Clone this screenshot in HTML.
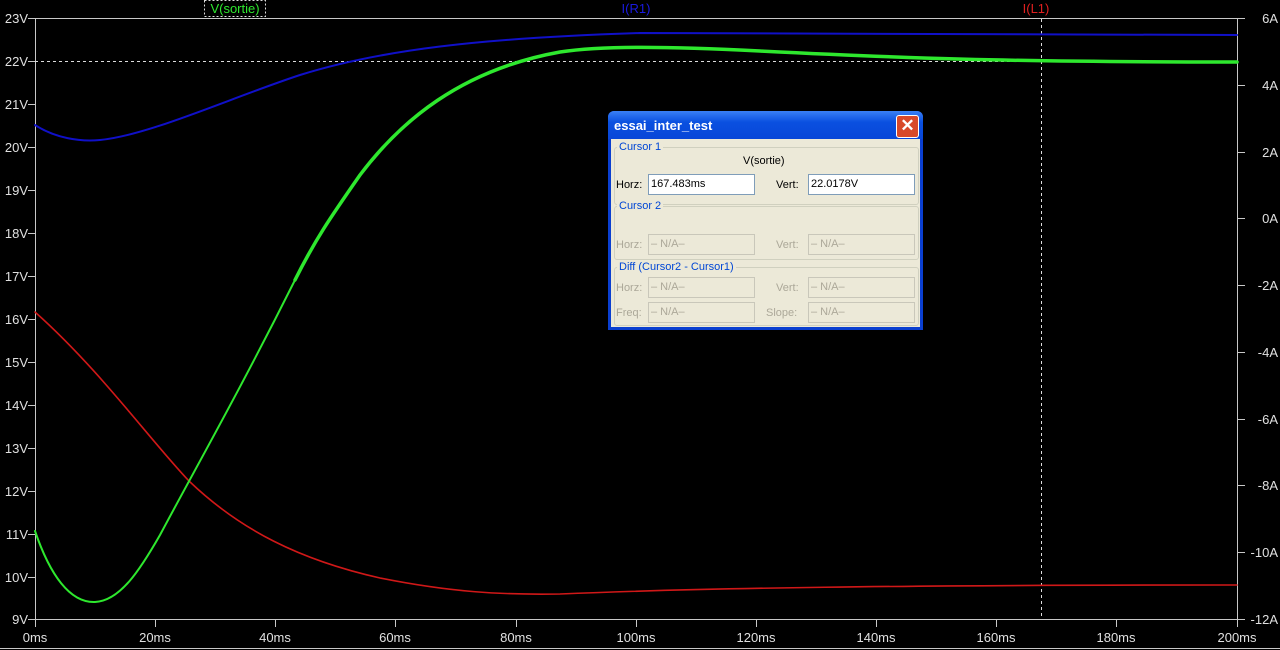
<!DOCTYPE html>
<html><head><meta charset="utf-8"><style>
html,body{margin:0;padding:0;background:#000;width:1280px;height:650px;overflow:hidden;font-family:"Liberation Sans",sans-serif}
svg{position:absolute;left:0;top:0}
.dlg{position:absolute;left:608px;top:111px;width:315px;height:219px;background:#0a3fd0;border-radius:6px 6px 0 0}
.tb{position:absolute;left:0;top:0;width:315px;height:28px;background:linear-gradient(#3a80f5,#0a50e0 40%,#0846d8);border-radius:6px 6px 0 0;color:#fff;font-weight:bold;font-size:13px;line-height:30px;padding-left:6px;box-sizing:border-box}
.x{position:absolute;right:4px;top:4px;width:21px;height:21px;background:#d8492a;border:1px solid #fff;border-radius:3px;color:#fff;font-size:17px;line-height:20px;text-align:center;font-weight:bold}
.body{position:absolute;left:3px;top:28px;width:309px;height:188px;background:#ece9d8}
.g{position:absolute;left:3px;width:303px;border:1px solid #d0d0bf;border-radius:3px}
.lg{position:absolute;font-size:11px;color:#0046d5;background:#ece9d8;padding:0 2px}
.l{position:absolute;font-size:11px;color:#000}
.d{color:#aca899}
.in{position:absolute;width:107px;height:21px;background:#fff;border:1px solid #7f9db9;box-sizing:border-box;font-size:11px;line-height:19px;padding-left:2px}
.in.dis{background:#ece9d8;color:#aca899;border-color:#c9c7ba}
</style></head><body>
<svg width="1280" height="650" xmlns="http://www.w3.org/2000/svg">
<g stroke="#c8c8c8" stroke-width="1" fill="none">
<line x1="35.5" y1="18" x2="35.5" y2="620"/>
<line x1="1237.5" y1="18" x2="1237.5" y2="620"/>
<line x1="35" y1="18.5" x2="1238" y2="18.5"/>
<line x1="35" y1="619.5" x2="1238" y2="619.5"/>
</g>
<g stroke="#c8c8c8" stroke-width="1">
<line x1="28" y1="18.5" x2="35" y2="18.5"/><line x1="28" y1="61.5" x2="35" y2="61.5"/><line x1="28" y1="104.5" x2="35" y2="104.5"/><line x1="28" y1="147.5" x2="35" y2="147.5"/><line x1="28" y1="190.5" x2="35" y2="190.5"/><line x1="28" y1="233.5" x2="35" y2="233.5"/><line x1="28" y1="276.5" x2="35" y2="276.5"/><line x1="28" y1="319.5" x2="35" y2="319.5"/><line x1="28" y1="362.5" x2="35" y2="362.5"/><line x1="28" y1="405.5" x2="35" y2="405.5"/><line x1="28" y1="448.5" x2="35" y2="448.5"/><line x1="28" y1="491.5" x2="35" y2="491.5"/><line x1="28" y1="534.5" x2="35" y2="534.5"/><line x1="28" y1="577.5" x2="35" y2="577.5"/><line x1="28" y1="619.5" x2="35" y2="619.5"/>
<line x1="1237" y1="18.5" x2="1245" y2="18.5"/><line x1="1237" y1="85.5" x2="1245" y2="85.5"/><line x1="1237" y1="152.5" x2="1245" y2="152.5"/><line x1="1237" y1="218.5" x2="1245" y2="218.5"/><line x1="1237" y1="285.5" x2="1245" y2="285.5"/><line x1="1237" y1="352.5" x2="1245" y2="352.5"/><line x1="1237" y1="419.5" x2="1245" y2="419.5"/><line x1="1237" y1="485.5" x2="1245" y2="485.5"/><line x1="1237" y1="552.5" x2="1245" y2="552.5"/><line x1="1237" y1="619.5" x2="1245" y2="619.5"/>
<line x1="35.5" y1="619" x2="35.5" y2="627"/><line x1="155.5" y1="619" x2="155.5" y2="627"/><line x1="275.5" y1="619" x2="275.5" y2="627"/><line x1="395.5" y1="619" x2="395.5" y2="627"/><line x1="516.5" y1="619" x2="516.5" y2="627"/><line x1="636.5" y1="619" x2="636.5" y2="627"/><line x1="756.5" y1="619" x2="756.5" y2="627"/><line x1="876.5" y1="619" x2="876.5" y2="627"/><line x1="996.5" y1="619" x2="996.5" y2="627"/><line x1="1116.5" y1="619" x2="1116.5" y2="627"/><line x1="1237.5" y1="619" x2="1237.5" y2="627"/>
</g>
<line x1="35" y1="61.5" x2="1237" y2="61.5" stroke="#ddd" stroke-dasharray="3,3"/>
<line x1="1041.5" y1="19" x2="1041.5" y2="619" stroke="#ddd" stroke-dasharray="3,3"/>
<g fill="none" stroke-linejoin="round" stroke-linecap="round">
<path stroke="#1010c8" stroke-width="2" d="M35,125 C55,138 80,142 100,140 C150,135 230,98 300,75 C380,50 480,38 640,33 C800,33 1000,35 1237,35"/>
<path stroke="#d01818" stroke-width="1.6" d="M35,312 C100,370 150,440 189,481 C240,530 300,560 380,578 C450,592 500,595 560,594 C700,588 900,585 1237,585"/>
<path stroke="#2ee82e" stroke-width="2" d="M35,531 C50,575 70,603 95,602 C120,601 140,570 160,535 C200,460 240,390 295,280"/>
<path stroke="#2ee82e" stroke-width="3.5" d="M295,280 C315,240 330,218 360,175 C400,122 460,70 560,52 C600,46 660,46 760,51 C900,58 1000,62 1237,62"/>
</g>
<g fill="#e0e0e0" font-family="Liberation Sans, sans-serif" font-size="13" text-anchor="end">
<text x="28" y="23">23V</text><text x="28" y="66">22V</text><text x="28" y="109">21V</text><text x="28" y="152">20V</text><text x="28" y="195">19V</text><text x="28" y="238">18V</text><text x="28" y="281">17V</text><text x="28" y="324">16V</text><text x="28" y="367">15V</text><text x="28" y="410">14V</text><text x="28" y="453">13V</text><text x="28" y="496">12V</text><text x="28" y="539">11V</text><text x="28" y="582">10V</text><text x="28" y="624">9V</text>
<text x="1278" y="23">6A</text><text x="1278" y="90">4A</text><text x="1278" y="157">2A</text><text x="1278" y="223">0A</text><text x="1278" y="290">-2A</text><text x="1278" y="357">-4A</text><text x="1278" y="424">-6A</text><text x="1278" y="490">-8A</text><text x="1278" y="557">-10A</text><text x="1278" y="624">-12A</text>
</g>
<g fill="#e0e0e0" font-family="Liberation Sans, sans-serif" font-size="13" text-anchor="middle">
<text x="35" y="642">0ms</text><text x="155" y="642">20ms</text><text x="275" y="642">40ms</text><text x="395" y="642">60ms</text><text x="516" y="642">80ms</text><text x="636" y="642">100ms</text><text x="756" y="642">120ms</text><text x="876" y="642">140ms</text><text x="996" y="642">160ms</text><text x="1116" y="642">180ms</text><text x="1237" y="642">200ms</text>
</g>
<rect x="204.5" y="0.5" width="61" height="16" fill="none" stroke="#ddd" stroke-dasharray="2,2"/>
<text x="235" y="13" fill="#2ee82e" font-family="Liberation Sans, sans-serif" font-size="13" text-anchor="middle">V(sortie)</text>
<text x="636" y="13" fill="#1a1ae0" font-family="Liberation Sans, sans-serif" font-size="13" text-anchor="middle">I(R1)</text>
<text x="1036" y="13" fill="#e02020" font-family="Liberation Sans, sans-serif" font-size="13" text-anchor="middle">I(L1)</text>
<line x1="0" y1="648.5" x2="1280" y2="648.5" stroke="#c8c8c8"/>
</svg>
<div class="dlg">
<div class="tb">essai_inter_test<div class="x">✕</div></div>
<div class="body">
<div class="g" style="top:8px;height:56px"></div><div class="lg" style="left:6px;top:2px">Cursor 1</div>
<div class="l" style="left:132px;top:16px">V(sortie)</div>
<div class="l" style="left:5px;top:40px">Horz:</div><div class="in" style="left:37px;top:35px">167.483ms</div>
<div class="l" style="left:165px;top:40px">Vert:</div><div class="in" style="left:197px;top:35px">22.0178V</div>
<div class="g" style="top:67px;height:52px"></div><div class="lg" style="left:6px;top:61px">Cursor 2</div>
<div class="l d" style="left:5px;top:100px">Horz:</div><div class="in dis" style="left:37px;top:95px">– N/A–</div>
<div class="l d" style="left:165px;top:100px">Vert:</div><div class="in dis" style="left:197px;top:95px">– N/A–</div>
<div class="g" style="top:128px;height:57px"></div><div class="lg" style="left:6px;top:122px">Diff (Cursor2 - Cursor1)</div>
<div class="l d" style="left:5px;top:143px">Horz:</div><div class="in dis" style="left:37px;top:138px">– N/A–</div>
<div class="l d" style="left:165px;top:143px">Vert:</div><div class="in dis" style="left:197px;top:138px">– N/A–</div>
<div class="l d" style="left:5px;top:168px">Freq:</div><div class="in dis" style="left:37px;top:163px">– N/A–</div>
<div class="l d" style="left:155px;top:168px">Slope:</div><div class="in dis" style="left:197px;top:163px">– N/A–</div>
</div></div>
</body></html>
